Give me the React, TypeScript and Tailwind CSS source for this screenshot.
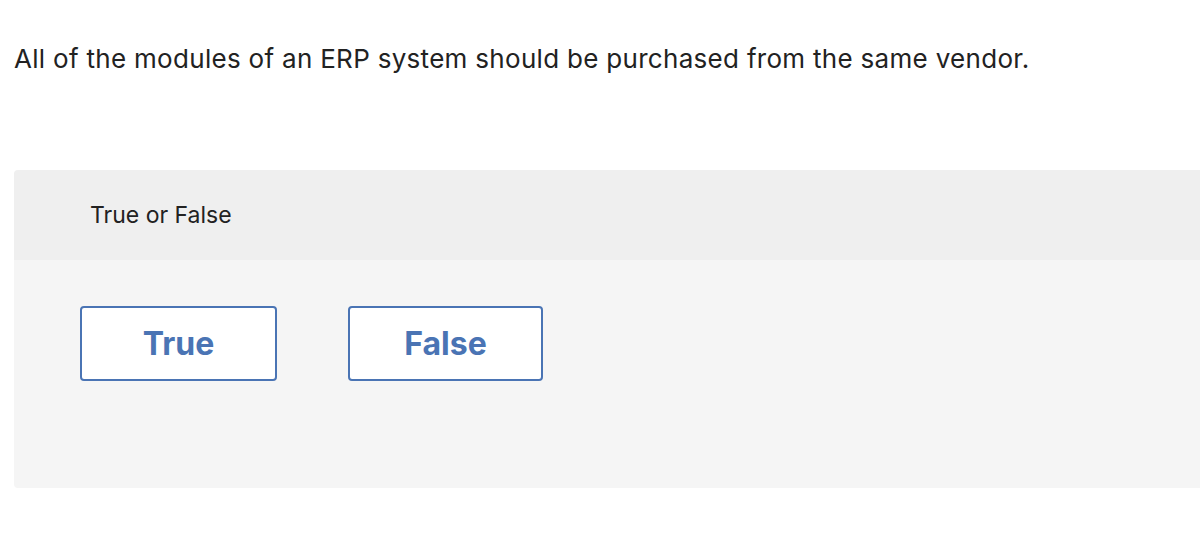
import React from "react";

export default function App() {
  return (
    <div className="w-[1200px] h-[554px] bg-white overflow-hidden" style={{ fontFamily: 'Inter, "Liberation Sans", sans-serif' }}>
      <div className="pt-[41px] pl-[14px]">
        <p className="text-[26px] leading-[36px] text-[#222222] tracking-[0.3px]">
          All of the modules of an ERP system should be purchased from the same vendor.
        </p>
      </div>
      <div className="mt-[93px] ml-[14px] w-[1200px] rounded-l-[4px] overflow-hidden">
        <div className="h-[90px] bg-[#efefef] pl-[76px] flex items-center">
          <span className="text-[23px] text-[#222222]">True or False</span>
        </div>
        <div className="h-[228px] bg-[#f5f5f5] pl-[66px] pt-[46px] flex items-start gap-[71px]">
          <button className="w-[197px] h-[75px] bg-white border-2 border-[#4a74b4] rounded-[4px] text-[#4a74b4] text-[32px] font-bold">
            True
          </button>
          <button className="w-[195px] h-[75px] bg-white border-2 border-[#4a74b4] rounded-[4px] text-[#4a74b4] text-[32px] font-bold">
            False
          </button>
        </div>
      </div>
    </div>
  );
}
